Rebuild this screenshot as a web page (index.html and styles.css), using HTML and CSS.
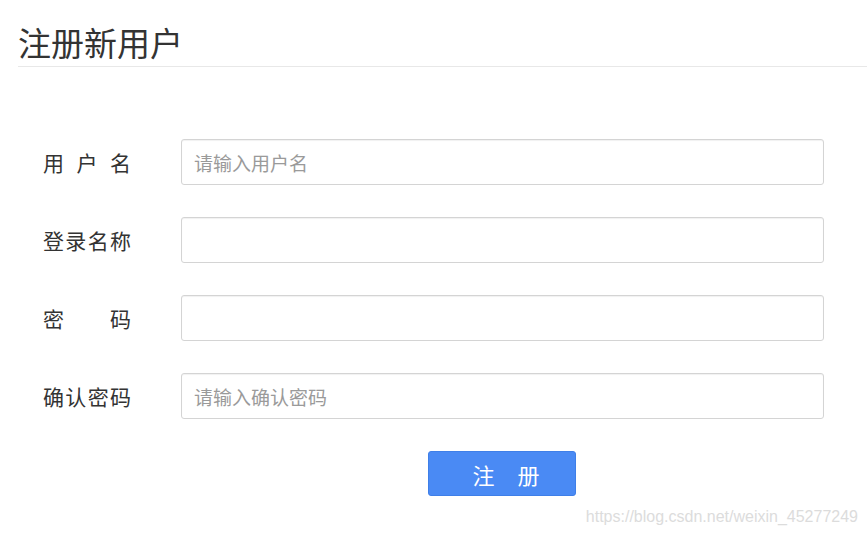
FILE: index.html
```html
<!DOCTYPE html>
<html lang="zh-CN">
<head>
<meta charset="utf-8">
<title>注册新用户</title>
<link rel="stylesheet" href="styles.css">
</head>
<body>
<div class="page">
  <h1 class="title">注册新用户</h1>
  <form class="form">
    <div class="row">
      <label class="label">用户名</label>
      <input class="input" type="text" placeholder="请输入用户名">
    </div>
    <div class="row">
      <label class="label">登录名称</label>
      <input class="input" type="text">
    </div>
    <div class="row">
      <label class="label">密码</label>
      <input class="input" type="password">
    </div>
    <div class="row">
      <label class="label">确认密码</label>
      <input class="input" type="password" placeholder="请输入确认密码">
    </div>
    <div class="actions">
      <button class="btn" type="button"><span class="btn-text">注册</span></button>
    </div>
  </form>
  <div class="watermark">https://blog.csdn.net/weixin_45277249</div>
</div>
</body>
</html>
```
FILE: styles.css
```css
* { box-sizing: border-box; }
html, body { margin: 0; padding: 0; background: #fff; }
body {
  font-family: "Microsoft YaHei", "Noto Sans CJK SC", "Noto Sans", sans-serif;
  color: #333;
}
.page {
  width: 867px;
  height: 538px;
  overflow: hidden;
}
.title {
  margin: 22px 0 0 18px;
  padding: 0 0 3px 0;
  font-size: 33px;
  font-weight: normal;
  line-height: 41px;
  color: #333;
  border-bottom: 1px solid #e8e8e8;
}
.form {
  display: flex;
  flex-direction: column;
  gap: 32px;
  margin-top: 72px;
  padding-left: 43px;
}
.row {
  display: flex;
  align-items: center;
}
.label {
  width: 88px;
  font-size: 21px;
  text-align: justify;
  text-align-last: justify;
  color: #333;
  margin-right: 50px;
}
.input {
  width: 643px;
  height: 46px;
  border: 1px solid #d4d4d4;
  border-radius: 3px;
  box-shadow: inset 0 1px 1px rgba(0,0,0,0.06);
  padding: 0 12px;
  font-size: 19px;
  font-family: "Microsoft YaHei", "Noto Sans CJK SC", sans-serif;
  color: #333;
  outline: none;
}
.input::placeholder { color: #9a9a9a; }
.actions {
  padding-left: 385px;
}
.btn {
  width: 148px;
  height: 45px;
  background: #4a8af4;
  border: 1px solid #3f7fe8;
  border-radius: 3px;
  color: #fff;
  font-size: 22px;
  font-family: "Noto Sans CJK SC", sans-serif;
  cursor: pointer;
  padding: 0 0 0 8px;
}
.btn-text {
  display: inline-block;
  width: 67px;
  text-align: justify;
  text-align-last: justify;
}
.watermark {
  margin-top: 12px;
  padding-right: 9px;
  text-align: right;
  font-family: "Liberation Sans", Arial, sans-serif;
  font-size: 16px;
  color: #dcdcdc;
}
```
